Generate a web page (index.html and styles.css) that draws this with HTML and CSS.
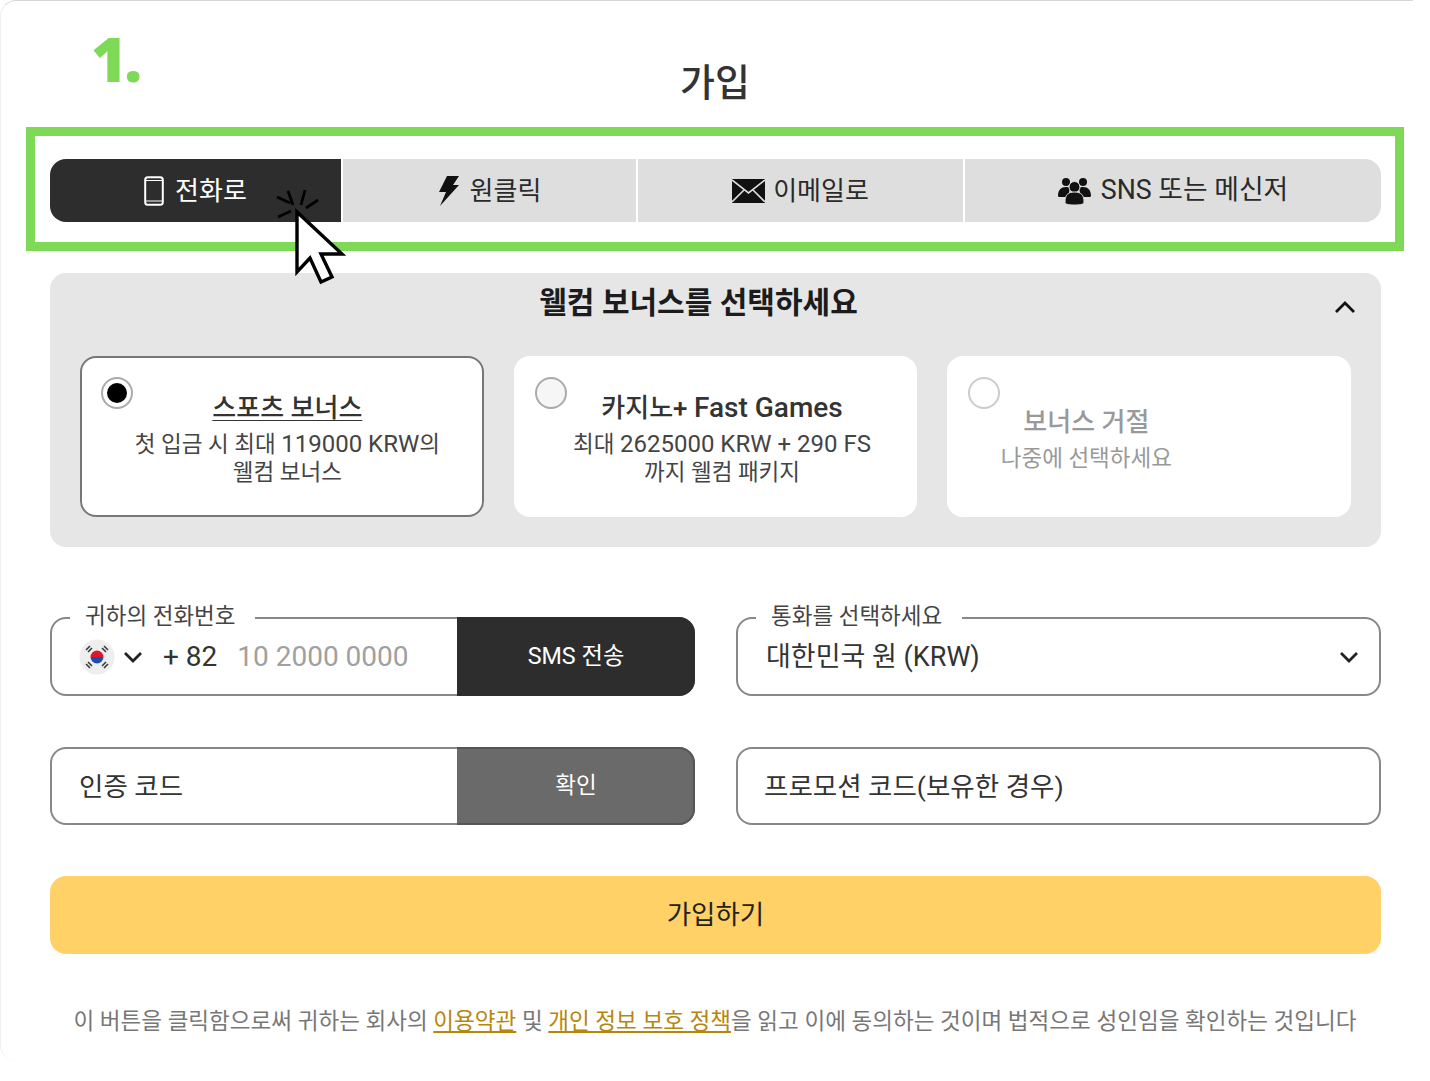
FILE: index.html
```html
<!DOCTYPE html>
<html lang="ko">
<head>
<meta charset="utf-8">
<title>가입</title>
<link rel="stylesheet" href="styles.css">
</head>
<body>
<main class="sheet">
  <div class="step">1.</div>
  <h1 class="title">가입</h1>
  <section class="frame">
    <nav class="tabs">
      <button class="tab tab-active">
        <svg class="ico" width="20" height="30" viewBox="0 0 20 30"><rect x="1.2" y="1.2" width="17.6" height="27.6" rx="2.6" fill="none" stroke="#fff" stroke-width="2"/><path d="M1.5 4.5h17M1.5 25h17" stroke="#fff" stroke-width="1.2"/></svg>
        <span>전화로</span>
      </button>
      <button class="tab">
        <svg class="ico" width="22" height="30" viewBox="0 0 22 30"><path d="M9 0h12l-6 9h6L2 30l6-14H1z" fill="#111"/></svg>
        <span>원클릭</span>
      </button>
      <button class="tab tab-mail">
        <svg class="ico" width="33" height="24" viewBox="0 0 33 24"><rect width="33" height="24" fill="#111"/><path d="M0 1l16.500 13L33 1M0 23l12-12M33 23L21 11" fill="none" stroke="#ddd" stroke-width="1.600"/></svg>
        <span>이메일로</span>
      </button>
      <button class="tab tab-wide">
        <svg class="ico" width="33" height="28" viewBox="0 0 33 28"><g fill="#111"><circle cx="8" cy="5" r="4"/><circle cx="25" cy="5" r="4"/><path d="M0 19c0-6 3-9 8-9 1.500 0 3 .4 4 1l-2 9H2c-1 0-2-.2-2-1zM33 19c0-6-3-9-8-9-1.500 0-3 .4-4 1l2 9h8c1 0 2-.2 2-1z"/><circle cx="16.500" cy="10" r="5.500" stroke="#ddd" stroke-width="1"/><path d="M7 25c0-7 3-10 9.500-10S26 18 26 25c0 2-2 3-9.500 3S7 27 7 25z" stroke="#ddd" stroke-width="1"/></g></svg>
        <span>SNS 또는 메신저</span>
      </button>
    </nav>
  </section>
  <svg class="cursor" width="74" height="100" viewBox="0 0 74 100">
    <g stroke="#000" stroke-width="2.800" fill="none"><path d="M5 11l13 6M6 31l13-6M16 5l5 14M33 4l-4 15M46 14l-12 8"/></g>
    <path d="M25 26v60l13-14 11 24 11-5-11-23h21z" fill="#fff" stroke="#000" stroke-width="3.400" stroke-linejoin="miter"/>
  </svg>
  <section class="bonus">
    <header class="bonus-head">
      <h2 class="bonus-title">웰컴 보너스를 선택하세요</h2>
      <svg class="bonus-chev" width="22" height="14" viewBox="0 0 22 14"><path d="M2 12l9-9 9 9" fill="none" stroke="#111" stroke-width="2.800"/></svg>
    </header>
    <div class="cards">
      <article class="card card-on">
        <span class="radio radio-on"></span>
        <div class="card-text">
          <h3 class="card-title under">스포츠 보너스</h3>
          <p class="card-desc">첫 입금 시 최대 <span class="lat">119000 KRW</span>의<br>웰컴 보너스</p>
        </div>
      </article>
      <article class="card">
        <span class="radio"></span>
        <div class="card-text">
          <h3 class="card-title">카지노+ <span class="lat-title">Fast Games</span></h3>
          <p class="card-desc">최대 <span class="lat">2625000 KRW + 290 FS</span><br>까지 웰컴 패키지</p>
        </div>
      </article>
      <article class="card card-off">
        <span class="radio"></span>
        <div class="card-text card-text-off">
          <h3 class="card-title">보너스 거절</h3>
          <p class="card-desc">나중에 선택하세요</p>
        </div>
      </article>
    </div>
  </section>
  <form class="form">
    <div class="field field-joined">
      <span class="legend">귀하의 전화번호</span>
      <div class="phone">
        <svg class="flag" width="36" height="36" viewBox="0 0 36 36">
          <circle cx="18" cy="18" r="17.500" fill="#eee"/>
          <path d="M11.500 18a6.500 6.500 0 0 1 13 0z" fill="#e0182d"/><path d="M11.500 18a6.500 6.500 0 0 0 13 0z" fill="#1a4fb0"/>
          <g stroke="#333" stroke-width="1.500"><path d="M7 11l4-4M9 13l4-4M25 7l4 4M23 9l4 4M7 25l4 4M9 23l4 4M25 29l4-4M23 27l4-4"/></g>
        </svg>
        <svg class="chev" width="20" height="12" viewBox="0 0 20 12"><path d="M2 2l8 8 8-8" fill="none" stroke="#222" stroke-width="2.800"/></svg>
        <span class="dial">+ 82</span>
        <span class="ph">10 2000 0000</span>
      </div>
      <button type="button" class="side side-dark">SMS 전송</button>
    </div>
    <div class="field select">
      <span class="legend">통화를 선택하세요</span>
      <span class="value">대한민국 원 (KRW)</span>
      <svg class="chev" width="20" height="12" viewBox="0 0 20 12"><path d="M2 2l8 8 8-8" fill="none" stroke="#222" stroke-width="2.800"/></svg>
    </div>
    <div class="field field-joined">
      <div class="code">인증 코드</div>
      <button type="button" class="side side-gray">확인</button>
    </div>
    <div class="field promo">프로모션 코드(보유한 경우)</div>
    <button type="button" class="submit">가입하기</button>
  </form>
  <p class="legal">이 버튼을 클릭함으로써 귀하는 회사의 <a href="#">이용약관</a> 및 <a href="#">개인 정보 보호 정책</a>을 읽고 이에 동의하는 것이며 법적으로 성인임을 확인하는 것입니다</p>
</main>
</body>
</html>
```
FILE: styles.css
```css
* { box-sizing: border-box; }
html, body { margin: 0; padding: 0; background: #fff; }
body { font-family: Roboto, "Noto Sans CJK KR", sans-serif; color: #2d2d2d; }
.sheet { position: relative; width: 1430px; height: 1081px; padding-top: 62px; overflow: hidden; }
.sheet::before { content: ""; position: absolute; left: 0; top: 0; width: 1412px; height: 1060px; border-top: 1px solid #d8d8d8; border-left: 1px solid #efefef; border-radius: 16px 0 0 16px; }
.step { position: absolute; left: 91px; top: 18px; font: 800 62px/80px "Open Sans", sans-serif; letter-spacing: -3px; color: #7ed957; }
.title { margin: 0; height: 42px; font-size: 38px; line-height: 42px; font-weight: 500; text-align: center; color: #333; }
.frame { margin: 23px 0 0 26px; width: 1378px; height: 124px; padding: 23px 14px 0 15px; border: 9px solid #7ed957; }
.tabs { display: grid; grid-template-columns: 291px 293px 325px 1fr; gap: 2px; height: 63px; border-radius: 16px; overflow: hidden; }
.tab { display: flex; align-items: center; justify-content: center; gap: 10px; border: 0; padding: 0; background: #dedede; color: #2a2a2a; font: 400 26px/1 Roboto, "Noto Sans CJK KR", sans-serif; }
.tab-active { background: #2d2d2d; color: #fff; gap: 11px; }
.tab-mail { gap: 8px; }
.tab-wide { font-size: 26.800px; }
.ico { flex: none; }
.cursor { position: absolute; left: 272px; top: 186px; }
.bonus { margin: 22px 49px 0 50px; height: 274px; border-radius: 16px; background: #e6e6e6; padding: 0 30px; }
.bonus-head { position: relative; height: 83px; }
.bonus-title { margin: 0; padding-top: 10px; padding-right: 34px; font-size: 30px; line-height: 40px; font-weight: 700; text-align: center; color: #1c1c1c; }
.bonus-chev { position: absolute; right: -5px; top: 27px; }
.cards { display: grid; grid-template-columns: repeat(3, 1fr); gap: 30px; }
.card { position: relative; height: 161px; border-radius: 16px; background: #fff; text-align: center; }
.card-on { border: 2px solid #777; }
.radio { position: absolute; left: 21px; top: 21px; width: 32px; height: 32px; border-radius: 50%; border: 2px solid #aaa; background: #f6f6f6; }
.card-off .radio { border-color: #ccc; background: #fff; }
.card-on .radio { left: 19px; top: 19px; background: #fff; }
.radio-on::after { content: ""; position: absolute; inset: 4px; border-radius: 50%; background: #000; }
.card-text { width: 100%; padding: 34px 0 0 13px; }
.card-on .card-text { padding: 32px 0 0 11px; }
.card-text-off { padding-top: 48px; padding-left: 0; width: 278px; margin-left: 0; }
.card-title { margin: 0 0 4px; font-size: 26px; line-height: 36px; font-weight: 500; color: #333; }
.lat-title { font-size: 28px; }
.under { display: inline-block; text-decoration: underline; text-underline-offset: 3px; text-decoration-thickness: 1px; margin-bottom: 4px; }
.card-desc { margin: 0; font-size: 22.500px; line-height: 28px; color: #444; }
.lat { font-size: 24px; }
.card-off .card-title, .card-off .card-desc { color: #999; }
.form { display: grid; grid-template-columns: 645px 645px; column-gap: 41px; margin: 70px 49px 0 50px; grid-template-rows: 79px 78px 78px; row-gap: 51px; }
.field { position: relative; display: flex; align-items: center; border: 2px solid #888; border-radius: 16px; background: #fff; font-size: 26.500px; color: #333; }
.legend { position: absolute; left: 18px; top: -19px; padding: 0 20px 0 15px; background: #fff; font-size: 22.500px; line-height: 32px; color: #444; }
.field-joined { overflow: visible; }
.phone { display: flex; align-items: center; width: 407px; padding-left: 27px; font-size: 28px; }
.flag { flex: none; }
.phone .chev { margin-left: 8px; }
.dial { margin-left: 20px; }
.ph { margin-left: 20px; color: #a0a0a0; }
.side { align-self: stretch; flex: 1; margin: -2px; border: 0; border-radius: 0 16px 16px 0; color: #fff; font: 400 23.300px/1 Roboto, "Noto Sans CJK KR", sans-serif; }
.side-dark { background: #2d2d2d; padding-top: 1px; }
.side-gray { background: #6a6a6a; border: 2px solid #555; border-left: 0; font-size: 22.500px; padding: 0 0 2px 2px; }
.code { width: 407px; padding: 0 0 4px 27px; }
.select { justify-content: space-between; padding: 0 20px 0 28px; font-size: 27px; }
.select .value { margin-top: -5px; }
.promo { padding: 0 0 4px 26px; }
.submit { grid-column: 1 / -1; border: 0; border-radius: 16px; background: #ffd166; color: #222; font: 400 26.500px/1 Roboto, "Noto Sans CJK KR", sans-serif; }
.legal { margin: 52px 0 0; font-size: 22.550px; line-height: 32px; text-align: center; color: #777; }
.legal a { color: #b8860b; }
```
